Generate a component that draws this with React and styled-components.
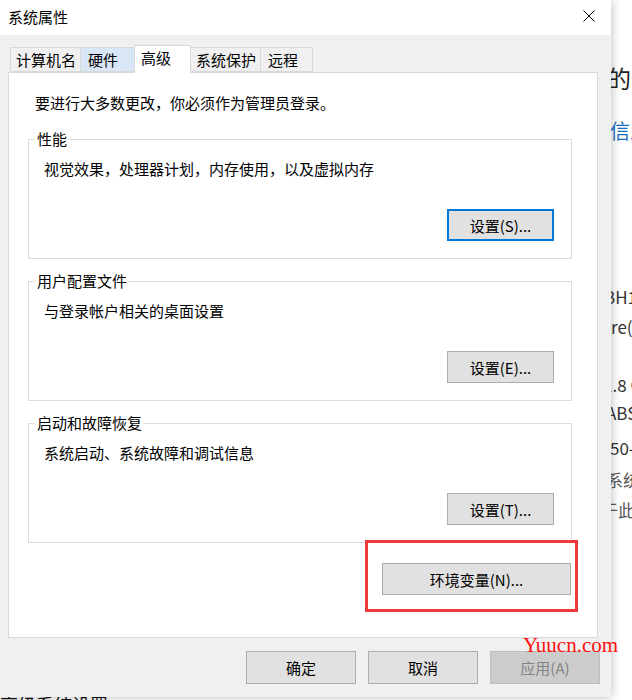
import React from "react";
import styled, { createGlobalStyle } from "styled-components";

const GlobalStyle = createGlobalStyle`
  html, body {
    margin: 0;
    padding: 0;
    background: #ffffff;
  }
  body {
    font-family: "Noto Sans CJK SC", "Noto Sans", sans-serif;
    font-size: 15px;
    color: #000;
  }
`;

const font = `"Noto Sans CJK SC", "Noto Sans", sans-serif`;

const Desktop = styled.div`
  position: relative;
  width: 632px;
  height: 700px;
  overflow: hidden;
  background: #ffffff;
`;

// page that sits behind the dialog window
const BgPage = styled.div`
  display: flex;
  flex-direction: column;
  font-family: ${font};
`;

const BgLine = styled.div`
  margin-top: ${(p) => p.$top}px;
  margin-left: ${(p) => p.$x}px;
  font-size: ${(p) => p.$size || 17}px;
  line-height: ${(p) => p.$lh || 22}px;
  color: ${(p) => p.$color || "#333"};
  white-space: nowrap;
`;

const Dialog = styled.div`
  position: absolute;
  left: 0;
  top: 0;
  width: 611px;
  height: 697px;
  display: flex;
  flex-direction: column;
  background: #f0f0f0;
  box-shadow: 0 0 10px rgba(0, 0, 0, 0.28);
  font-family: ${font};
`;

const TitleBar = styled.div`
  height: 35px;
  flex: none;
  display: flex;
  align-items: center;
  justify-content: space-between;
  padding: 0 16px 3px 8px;
  box-sizing: border-box;
  background: #ffffff;
  font-size: 15px;
`;

const CloseBtn = styled.svg`
  width: 12px;
  height: 12px;
  display: block;
`;

const Body = styled.div`
  display: flex;
  flex-direction: column;
  padding: 10px 13px 0 8px;
`;

const TabStrip = styled.div`
  display: flex;
  align-items: flex-end;
  padding-left: 2px;
  height: 28px;
  position: relative;
  z-index: 1;
  margin-bottom: -1px;
`;

const Tab = styled.div`
  box-sizing: border-box;
  flex: none;
  width: ${(p) => p.$w}px;
  height: ${(p) => (p.$active ? 28 : 25)}px;
  margin: ${(p) => (p.$active ? "0 -2px 0 -2px" : "0 0 1px 0")};
  padding: ${(p) => (p.$active ? "0 0 4px 6px" : p.$first ? "0 0 0 5px" : "0 0 0 7px")};
  display: flex;
  align-items: center;
  font-size: 15px;
  white-space: nowrap;
  background: ${(p) => (p.$active ? "#ffffff" : p.$hover ? "#d8e6f5" : "#f0f0f0")};
  border: 1px solid #d9d9d9;
  border-bottom: ${(p) => (p.$active ? "none" : "1px solid #d9d9d9")};
  border-left: ${(p) => (p.$first || p.$active ? "1px solid #d9d9d9" : "none")};
  position: relative;
  z-index: ${(p) => (p.$active ? 2 : 1)};
`;

const Panel = styled.div`
  background: #ffffff;
  border: 1px solid #d9d9d9;
  padding: 20px 25px 25px 19px;
  display: flex;
  flex-direction: column;
`;

const Intro = styled.div`
  margin-left: 7px;
  font-size: 15px;
  line-height: 20px;
`;

const Group = styled.fieldset`
  margin: ${(p) => p.$gap}px 0 0 0;
  padding: 11px 17px 17px 15px;
  border: 1px solid #dcdcdc;
  min-inline-size: 0;
  display: flex;
  flex-direction: column;
`;

const Legend = styled.legend`
  margin-left: -10px;
  padding: 0 1px 0 3px;
  font-size: 15px;
  line-height: 18px;
`;

const Desc = styled.div`
  font-size: 15px;
  line-height: 20px;
`;

const ButtonRow = styled.div`
  display: flex;
  justify-content: flex-end;
  gap: ${(p) => p.$gap || 0}px;
  margin-top: ${(p) => p.$top || 0}px;
  margin-right: ${(p) => p.$right || 0}px;
`;

const Button = styled.button`
  box-sizing: border-box;
  width: ${(p) => p.$w}px;
  height: ${(p) => p.$h || 32}px;
  padding: 0;
  font-family: ${font};
  font-size: 15px;
  color: ${(p) => (p.$disabled ? "#838383" : "#000")};
  background: ${(p) => (p.$disabled ? "#cccccc" : "#e1e1e1")};
  border: ${(p) =>
    p.$focused
      ? "2px solid #0078d7"
      : p.$disabled
      ? "1px solid #bfbfbf"
      : "1px solid #adadad"};
  border-radius: 0;
  cursor: default;
`;

const HighlightFrame = styled.div`
  margin-top: -3px;
  margin-right: -6px;
  padding: 20px 4px 14px 14px;
  border: 3px solid #ec3a3a;
`;

const Watermark = styled.div`
  position: absolute;
  left: 523px;
  top: 633px;
  font-family: "Liberation Serif", serif;
  font-size: 21px;
  line-height: 24px;
  color: #ff1010;
  z-index: 5;
`;

export default function App() {
  return (
    <Desktop>
      <GlobalStyle />
      <BgPage>
        <BgLine $top={63} $x={607} $size={24} $lh={30} $color="#222">的信息</BgLine>
        <BgLine $top={25} $x={610} $size={20} $lh={26} $color="#1a6fc4">信息</BgLine>
        <BgLine $top={142} $x={604}>BH1</BgLine>
        <BgLine $top={8} $x={611}>re(</BgLine>
        <BgLine $top={36} $x={603}>1.8 GHz</BgLine>
        <BgLine $top={6} $x={606}>ABS</BgLine>
        <BgLine $top={13} $x={610}>50-</BgLine>
        <BgLine $top={10} $x={606} $color="#555">系统</BgLine>
        <BgLine $top={8} $x={601} $color="#555">于此</BgLine>
        <BgLine $top={172} $x={0} $size={18} $color="#111">高级系统设置</BgLine>
      </BgPage>

      <Dialog>
        <TitleBar>
          <span>系统属性</span>
          <CloseBtn viewBox="0 0 12 12">
            <path d="M0.5 0.5 L11.5 11.5 M11.5 0.5 L0.5 11.5" stroke="#000" strokeWidth="1" />
          </CloseBtn>
        </TitleBar>

        <Body>
          <TabStrip>
            <Tab $first $w={71}>计算机名</Tab>
            <Tab $hover $w={55}>硬件</Tab>
            <Tab $active $w={57}>高级</Tab>
            <Tab $w={72}>系统保护</Tab>
            <Tab $w={52}>远程</Tab>
          </TabStrip>

          <Panel>
            <Intro>要进行大多数更改，你必须作为管理员登录。</Intro>

            <Group $gap={17}>
              <Legend>性能</Legend>
              <Desc>视觉效果，处理器计划，内存使用，以及虚拟内存</Desc>
              <ButtonRow $top={30}>
                <Button $w={107} $focused>设置(S)...</Button>
              </ButtonRow>
            </Group>

            <Group $gap={13}>
              <Legend>用户配置文件</Legend>
              <Desc>与登录帐户相关的桌面设置</Desc>
              <ButtonRow $top={30}>
                <Button $w={107}>设置(E)...</Button>
              </ButtonRow>
            </Group>

            <Group $gap={13}>
              <Legend>启动和故障恢复</Legend>
              <Desc>系统启动、系统故障和调试信息</Desc>
              <ButtonRow $top={30}>
                <Button $w={107}>设置(T)...</Button>
              </ButtonRow>
            </Group>

            <ButtonRow>
              <HighlightFrame>
                <Button $w={189}>环境变量(N)...</Button>
              </HighlightFrame>
            </ButtonRow>
          </Panel>

          <ButtonRow $top={13} $gap={12} $right={-2}>
            <Button $w={110} $h={33}>确定</Button>
            <Button $w={110} $h={33}>取消</Button>
            <Button $w={110} $h={33} $disabled>应用(A)</Button>
          </ButtonRow>
        </Body>
      </Dialog>

      <Watermark>Yuucn.com</Watermark>
    </Desktop>
  );
}
